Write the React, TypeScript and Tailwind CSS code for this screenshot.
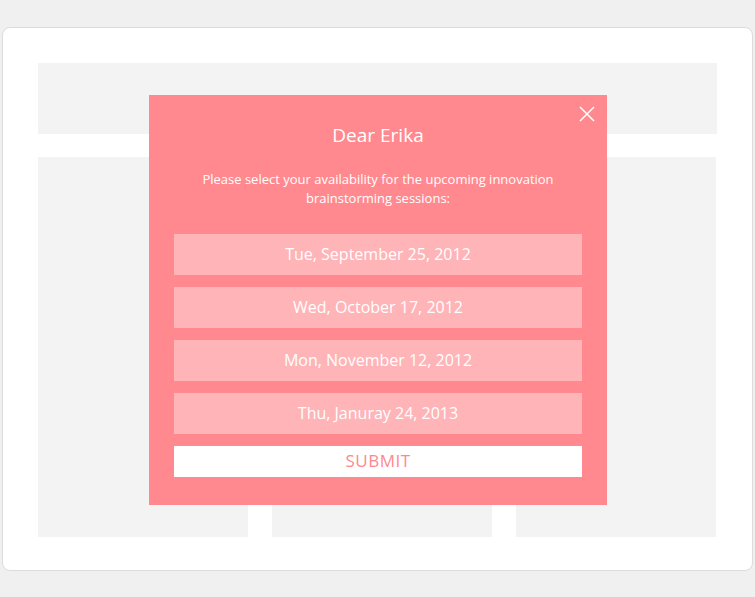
import React from "react";

const dates = [
  "Tue, September 25, 2012",
  "Wed, October 17, 2012",
  "Mon, November 12, 2012",
  "Thu, Januray 24, 2013",
];

export default function App() {
  return (
    <div
      className="relative w-[755px] h-[597px] bg-[#f0f0f0] pt-[27px] px-[2px]"
      style={{ fontFamily: "'Open Sans', 'Liberation Sans', sans-serif" }}
    >
      <div className="w-[751px] h-[544px] bg-white border border-[#dcdcdc] rounded-[8px] pt-[35px] pl-[35px] pr-[35px] flex flex-col gap-[23px]">
        <div className="h-[71px] bg-[#f3f3f3]" />
        <div className="h-[380px] flex gap-[24px]">
          <div className="w-[210px] bg-[#f3f3f3]" />
          <div className="w-[220px] bg-[#f3f3f3]" />
          <div className="w-[200px] bg-[#f3f3f3]" />
        </div>
      </div>

      <div className="absolute left-[149px] top-[95px] w-[458px] h-[410px] bg-[#ff898e] px-[25px] flex flex-col text-white">
        <button className="absolute right-[12px] top-[11px] w-[16px] h-[16px]">
          <svg width="16" height="16" viewBox="0 0 16 16">
            <path d="M1 1L15 15M15 1L1 15" stroke="white" strokeWidth="1.5" fill="none" />
          </svg>
        </button>
        <h1 className="mt-[26px] text-center text-[19px] leading-[28px]">Dear Erika</h1>
        <p className="mt-[21px] text-center text-[13px] leading-[19px] px-[20px] font-medium">
          Please select your availability for the upcoming innovation brainstorming sessions:
        </p>
        <div className="mt-[26px] flex flex-col gap-[12.5px]">
          {dates.map((d) => (
            <div
              key={d}
              className="h-[40.5px] bg-[#ffb4b8] flex items-center justify-center text-[16px]"
            >
              {d}
            </div>
          ))}
        </div>
        <div className="mt-[12px] h-[31px] bg-white flex items-center justify-center text-[17px] tracking-[0.5px] text-[#ff898e]">
          SUBMIT
        </div>
      </div>
    </div>
  );
}
